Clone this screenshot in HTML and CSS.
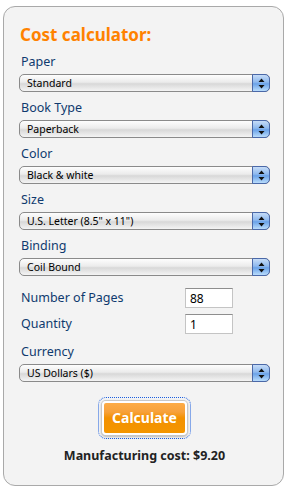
FILE: index.html
```html
<!DOCTYPE html>
<html lang="en">

<head>
    <meta charset="utf-8">
    <meta name="viewport" content="width=device-width, initial-scale=1.0">
    <title>Cost calculator</title>
    <link rel="stylesheet" href="styles.css">
</head>

<body>
    <section class="calc">
        <h1>Cost calculator:</h1>

        <div class="felt">
            <label for="paper">Paper</label>
            <div class="vaelg">
                <select id="paper">
                    <option>Standard</option>
                </select>
                <span class="pil"><svg width="7" height="11" viewBox="0 0 7 11"><path d="M3.5 0.5 L6.5 4 L0.5 4 Z M0.5 7 L6.5 7 L3.5 10.5 Z" fill="#111"/></svg></span>
            </div>
        </div>

        <div class="felt">
            <label for="booktype">Book Type</label>
            <div class="vaelg">
                <select id="booktype">
                    <option>Paperback</option>
                </select>
                <span class="pil"><svg width="7" height="11" viewBox="0 0 7 11"><path d="M3.5 0.5 L6.5 4 L0.5 4 Z M0.5 7 L6.5 7 L3.5 10.5 Z" fill="#111"/></svg></span>
            </div>
        </div>

        <div class="felt">
            <label for="color">Color</label>
            <div class="vaelg">
                <select id="color">
                    <option>Black &amp; white</option>
                </select>
                <span class="pil"><svg width="7" height="11" viewBox="0 0 7 11"><path d="M3.5 0.5 L6.5 4 L0.5 4 Z M0.5 7 L6.5 7 L3.5 10.5 Z" fill="#111"/></svg></span>
            </div>
        </div>

        <div class="felt">
            <label for="size">Size</label>
            <div class="vaelg">
                <select id="size">
                    <option>U.S. Letter (8.5" x 11")</option>
                </select>
                <span class="pil"><svg width="7" height="11" viewBox="0 0 7 11"><path d="M3.5 0.5 L6.5 4 L0.5 4 Z M0.5 7 L6.5 7 L3.5 10.5 Z" fill="#111"/></svg></span>
            </div>
        </div>

        <div class="felt">
            <label for="binding">Binding</label>
            <div class="vaelg">
                <select id="binding">
                    <option>Coil Bound</option>
                </select>
                <span class="pil"><svg width="7" height="11" viewBox="0 0 7 11"><path d="M3.5 0.5 L6.5 4 L0.5 4 Z M0.5 7 L6.5 7 L3.5 10.5 Z" fill="#111"/></svg></span>
            </div>
        </div>

        <div class="tal">
            <label for="pages">Number of Pages</label>
            <input id="pages" type="text" value="88">
            <label for="qty">Quantity</label>
            <input id="qty" type="text" value="1">
        </div>

        <div class="felt valuta">
            <label for="currency">Currency</label>
            <div class="vaelg">
                <select id="currency">
                    <option>US Dollars ($)</option>
                </select>
                <span class="pil"><svg width="7" height="11" viewBox="0 0 7 11"><path d="M3.5 0.5 L6.5 4 L0.5 4 Z M0.5 7 L6.5 7 L3.5 10.5 Z" fill="#111"/></svg></span>
            </div>
        </div>

        <div class="knap">
            <button type="button">Calculate</button>
        </div>

        <p class="resultat">Manufacturing cost: $9.20</p>
    </section>
</body>

</html>
```

FILE: styles.css
```css
body {
    margin: 0;
    font-family: 'Noto Sans', 'DejaVu Sans', sans-serif;
    background: #fff;
}

.calc {
    margin: 6px 4px 4px 3px;
    height: 480px;
    border: 1px solid #a9a9a9;
    border-radius: 12px;
    background: #f3f3f3;
    padding: 0 13px 0 15px;
    box-sizing: border-box;
}

h1 {
    margin: 0;
    padding-top: 17px;
    padding-left: 1px;
    font-size: 17px;
    line-height: 22px;
    font-weight: 700;
    color: #ff8200;
}

label {
    display: block;
    font-size: 12.5px;
    line-height: 16px;
    color: #0f3a6e;
    padding-left: 2px;
}

.felt {
    margin-top: 8px;
}

.felt label {
    margin-bottom: 4px;
}

.valuta {
    margin-top: 10px;
}

.vaelg {
    position: relative;
    height: 18px;
}

select {
    display: block;
    appearance: none;
    -webkit-appearance: none;
    width: 100%;
    height: 18px;
    margin: 0;
    border: 1px solid #8a8a8a;
    border-radius: 5px;
    background: linear-gradient(#fdfdfd, #ebebeb 45%, #d8d8d8 55%, #f4f4f4);
    font-family: 'Noto Sans', 'DejaVu Sans', sans-serif;
    font-size: 10.5px;
    color: #000;
    padding: 0 0 0 7px;
    line-height: 16px;
}

.pil {
    position: absolute;
    right: 0;
    top: 0;
    width: 18px;
    height: 18px;
    box-sizing: border-box;
    border: 1px solid #4a68a8;
    border-radius: 0 5px 5px 0;
    background: linear-gradient(#c6dcf7, #8db8ee 45%, #6aa2e8 55%, #b9dcfb);
    display: flex;
    align-items: center;
    justify-content: center;
}

.tal {
    display: grid;
    grid-template-columns: 166px 48px;
    row-gap: 6px;
    align-items: center;
    margin-top: 12px;
}

input {
    display: block;
    width: 48px;
    height: 20px;
    box-sizing: border-box;
    margin: 0;
    border: 1px solid #c4c4c4;
    border-top-color: #8e8e8e;
    background: #fff;
    font-family: 'Noto Sans', 'DejaVu Sans', sans-serif;
    font-size: 12px;
    color: #000;
    padding: 0 4px;
}

.knap {
    display: flex;
    justify-content: center;
    margin-top: 19px;
}

button {
    outline: 1px dotted #1a5ee0;
    outline-offset: 3px;
    border: 2px solid #fff;
    border-radius: 4px;
    box-shadow: 0 0 0 1px #c8c8c8, 0 1px 2px 1px #bbb;
    background: linear-gradient(#fdac47, #f7a13a 30%, #f39100 50%, #f49600);
    color: #fff;
    font-family: 'Noto Sans', 'DejaVu Sans', sans-serif;
    font-weight: 700;
    font-size: 14px;
    line-height: 20px;
    width: 85px;
    height: 34px;
    padding: 0;
}

.resultat {
    margin: 13px 0 0;
    text-align: center;
    font-size: 12.5px;
    line-height: 16px;
    font-weight: 700;
    color: #222;
}
```
